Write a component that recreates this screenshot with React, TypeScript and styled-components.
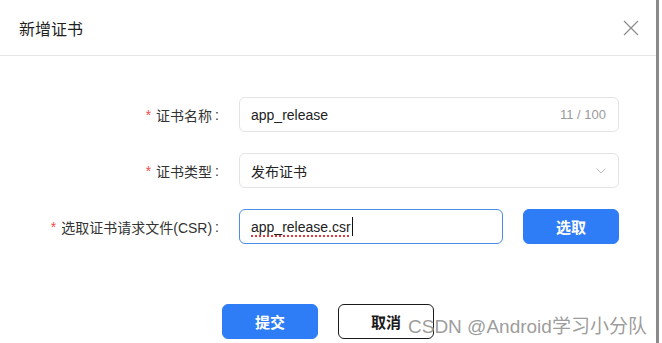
import React from 'react'
import styled, { createGlobalStyle } from 'styled-components'

const GlobalStyle = createGlobalStyle`
  html, body {
    margin: 0;
    padding: 0;
    background: #ffffff;
  }
  body {
    font-family: "Liberation Sans", "Noto Sans CJK SC", sans-serif;
    color: #222222;
  }
`

const Dialog = styled.div`
  position: relative;
  width: 659px;
  height: 343px;
  box-sizing: border-box;
  border-right: 3px solid #8a8a8a;
  background: #ffffff;
  overflow: hidden;
`

const Header = styled.div`
  display: flex;
  align-items: center;
  justify-content: space-between;
  height: 55px;
  padding: 0 17px 0 19px;
  border-bottom: 1px solid #e6e6e6;
`

const Title = styled.h1`
  margin: 0;
  font-size: 16px;
  font-weight: 400;
  color: #1f1f1f;
`

const Close = styled.div`
  display: flex;
  width: 16px;
  height: 16px;
`

const Form = styled.div`
  display: grid;
  grid-template-columns: 219px 380px;
  column-gap: 20px;
  row-gap: 21px;
  padding-top: 41px;
  grid-auto-rows: 35px;
`

const Label = styled.label`
  display: flex;
  align-items: center;
  justify-content: flex-end;
  font-size: 14px;
  color: #333333;
`

const Star = styled.span`
  color: #f24a4a;
  margin-right: 5px;
  font-size: 14px;
`

const Colon = styled.span`
  margin-left: 3px;
`

const Field = styled.div<{ $focused?: boolean }>`
  display: flex;
  align-items: center;
  box-sizing: border-box;
  height: 35px;
  padding: 0 12px 0 11px;
  border: 1px solid ${p => (p.$focused ? '#4a8ee8' : '#e3e3e3')};
  border-radius: 6px;
  font-size: 14px;
  color: #222222;
  flex: 1;
`

const Value = styled.span`
  flex: 1;
`

const Misspelled = styled.span`
  text-decoration: underline dotted #e03a3a;
  text-decoration-thickness: 1.5px;
  text-underline-offset: 3px;
`

const Caret = styled.span`
  display: inline-block;
  width: 1px;
  height: 19px;
  margin-left: 1px;
  vertical-align: -4px;
  background: #111111;
`

const Count = styled.span`
  font-size: 13px;
  color: #9a9a9a;
`

const Inline = styled.div`
  display: flex;
  gap: 20px;
`

const Button = styled.button<{ $primary?: boolean }>`
  box-sizing: border-box;
  width: 96px;
  height: 35px;
  border-radius: 6px;
  border: 1px solid ${p => (p.$primary ? '#2f7df6' : '#1a1a1a')};
  background: ${p => (p.$primary ? '#2f7df6' : '#ffffff')};
  color: ${p => (p.$primary ? '#ffffff' : '#1a1a1a')};
  font-family: inherit;
  font-size: 15px;
  font-weight: 700;
  cursor: pointer;
`

const Footer = styled.div`
  display: flex;
  justify-content: center;
  gap: 20px;
  margin-top: 60px;
`

const Watermark = styled.div`
  position: absolute;
  left: 408px;
  top: 311px;
  font-size: 19px;
  color: rgba(130, 130, 130, 0.8);
  text-shadow: 0 0 1px rgba(255, 255, 255, 0.8);
  white-space: nowrap;
`

const App = () => (
  <>
    <GlobalStyle />
    <Dialog>
      <Header>
        <Title>新增证书</Title>
        <Close>
          <svg width="16" height="16" viewBox="0 0 16 16">
            <path d="M1 1 L15 15 M15 1 L1 15" stroke="#8c8c8c" strokeWidth="1.2" fill="none" />
          </svg>
        </Close>
      </Header>
      <Form>
        <Label><Star>*</Star>证书名称<Colon>:</Colon></Label>
        <Field>
          <Value>app_release</Value>
          <Count>11 / 100</Count>
        </Field>

        <Label><Star>*</Star>证书类型<Colon>:</Colon></Label>
        <Field>
          <Value>发布证书</Value>
          <svg width="10" height="6" viewBox="0 0 10 6">
            <path d="M0.5 0.5 L5 5 L9.5 0.5" stroke="#bdbdbd" strokeWidth="1" fill="none" />
          </svg>
        </Field>

        <Label><Star>*</Star>选取证书请求文件(CSR)<Colon>:</Colon></Label>
        <Inline>
          <Field $focused>
            <Value><Misspelled>app_release.csr</Misspelled><Caret /></Value>
          </Field>
          <Button $primary>选取</Button>
        </Inline>
      </Form>
      <Footer>
        <Button $primary>提交</Button>
        <Button>取消</Button>
      </Footer>
      <Watermark>CSDN @Android学习小分队</Watermark>
    </Dialog>
  </>
)

export default App
